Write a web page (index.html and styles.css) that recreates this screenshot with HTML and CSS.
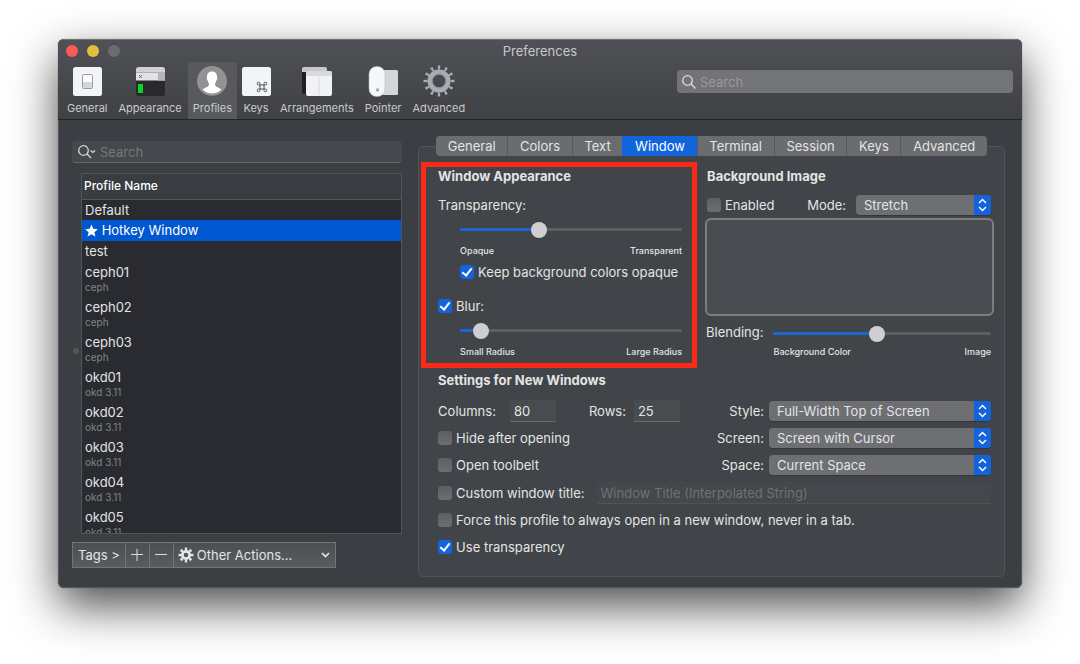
FILE: index.html
```html
<!DOCTYPE html>
<html lang="en">
<head>
  <meta charset="UTF-8" />
  <meta name="viewport" content="width=device-width, initial-scale=1.0"/>
  <title>Preferences</title>
  <link rel="stylesheet" href="styles.css">
</head>
<body>
  <div class="window">
    <header class="titlebar">
      <div class="title-row">
        <div class="lights">
          <button class="light close" aria-label="Close"></button>
          <button class="light minimize" aria-label="Minimize"></button>
          <button class="light zoom" aria-label="Zoom" disabled></button>
        </div>
        <h1>Preferences</h1>
      </div>
      <div class="toolbar">
        <button class="tool">
          <svg width="32" height="32" viewBox="0 0 32 32">
            <rect x="2" y="2" width="29" height="29" rx="2.5" fill="#f3f4f8"/>
            <rect x="11.5" y="9.5" width="10" height="14" rx="1" fill="#fbfbfc" stroke="#9a9ca1"/>
            <rect x="12" y="17" width="9" height="6" fill="#d3d6da"/>
          </svg>
          General
        </button>
        <button class="tool">
          <svg width="32" height="32" viewBox="0 0 32 32">
            <rect x="2" y="2" width="29" height="29" rx="2.5" fill="#29292b"/>
            <path d="M2 7.500V4.500A2.500 2.500 0 0 1 4.500 2H28.500A2.500 2.500 0 0 1 31 4.500V7.500Z" fill="#d2d2d4"/>
            <rect x="2" y="7.500" width="29" height="8" fill="#e2e3e4"/>
            <rect x="24" y="7.500" width="7" height="8" fill="#b4b6b8"/>
            <path d="M5 10l3 3m0-3l-3 3" stroke="#6b6d70"/>
            <rect x="4" y="19" width="5" height="9" fill="#0fd127"/>
          </svg>
          Appearance
        </button>
        <button class="tool active">
          <svg width="32" height="32" viewBox="0 0 32 32">
            <circle cx="16" cy="16" r="15" fill="#929294"/>
            <path d="M16 6.500c-3.500 0-5.200 2.400-5 5.500.1 1-.5 1 0 2.500.3 1 .9 1 1 1.700.2 1.600 1 2 1 3.300 0 2.500-4.500 3.300-6.500 5A14.900 14.900 0 0 0 16 28.500a14.900 14.900 0 0 0 9.500-4c-2-1.700-6.500-2.500-6.500-5 0-1.300.8-1.700 1-3.300.1-.7.700-.7 1-1.700.5-1.500-.1-1.500 0-2.500.2-3.100-1.500-5.500-5-5.500Z" fill="#fff"/>
          </svg>
          Profiles
        </button>
        <button class="tool">
          <svg width="32" height="32" viewBox="0 0 32 32">
            <rect x="2" y="2" width="29" height="29" rx="2.500" fill="#f3f4f8"/>
            <path d="M20 20h4v4h-4zM20 20h-1.400a1.400 1.400 0 1 1 1.400-1.400zM24 20h1.400a1.400 1.400 0 1 0-1.400-1.400zM20 24h-1.400a1.400 1.400 0 1 0 1.400 1.400zM24 24h1.400a1.400 1.400 0 1 1-1.400 1.400z" fill="none" stroke="#55575b"/>
          </svg>
          Keys
        </button>
        <button class="tool">
          <svg width="32" height="32" viewBox="0 0 32 32">
            <path d="M1 7h5v22H3a2 2 0 0 1-2-2z" fill="#202022"/>
            <path d="M1 7V4a2 2 0 0 1 2-2h21a2 2 0 0 1 2 2v3z" fill="#c7c8ca"/>
            <rect x="5" y="6" width="26" height="25" rx="2" fill="#f1f2f5"/>
            <path d="M5 11V8a2 2 0 0 1 2-2h22a2 2 0 0 1 2 2v3z" fill="#d9dadc"/>
            <path d="M18 12v18" stroke="#d5d7dc"/>
          </svg>
          Arrangements
        </button>
        <button class="tool">
          <svg width="32" height="32" viewBox="0 0 32 32">
            <rect x="14" y="5" width="17" height="25" rx="1.500" fill="#d3d7d8"/>
            <rect x="2" y="1.500" width="16" height="30" rx="7.500" fill="#f6f7f9" stroke="#b4b6b9" stroke-width=".5"/>
            <circle cx="10.500" cy="25" r="1.700" fill="#a5a7a9"/>
          </svg>
          Pointer
        </button>
        <button class="tool">
          <svg width="32" height="32" viewBox="0 0 32 32" fill="none">
            <circle cx="16" cy="16" r="13.500" stroke="#a6adb3" stroke-width="4" pathLength="36" stroke-dasharray="1 2" stroke-dashoffset=".5"/>
            <circle cx="16" cy="16" r="9" stroke="#a6adb3" stroke-width="5"/>
            <circle cx="16" cy="16" r="7" stroke="#8a9298"/>
          </svg>
          Advanced
        </button>
        <div class="search toolbar-search">
          <svg width="16" height="16" viewBox="0 0 16 16" fill="none" stroke="#dfdfe1" stroke-width="1.300">
            <circle cx="6.500" cy="6.500" r="4.800"/><path d="M10 10l4.500 4.500"/>
          </svg>
          <input type="search" placeholder="Search" aria-label="Search preferences">
        </div>
      </div>
    </header>

    <main class="content">
      <aside class="profiles">
        <div class="search profile-search">
          <svg width="20" height="16" viewBox="0 0 20 16" fill="none" stroke="#d4d5d6" stroke-width="1.300">
            <circle cx="6.500" cy="6.500" r="4.800"/><path d="M10 10l4 4M13.500 6.500l2.300 2 2.300-2"/>
          </svg>
          <input type="search" placeholder="Search" aria-label="Search profiles">
        </div>
        <div class="list">
          <table>
            <thead><tr><th>Profile Name</th></tr></thead>
            <tbody>
              <tr><td>Default</td></tr>
              <tr class="selected"><td><svg width="13" height="13" viewBox="0 0 24 24" fill="#fff"><path d="M12 1l3.300 7.800 8.400.7-6.400 5.500 2 8.300L12 18.900l-7.300 4.400 2-8.300L.3 9.500l8.400-.7z"/></svg> Hotkey Window</td></tr>
              <tr><td>test</td></tr>
              <tr class="tagged"><td>ceph01<small>ceph</small></td></tr>
              <tr class="tagged"><td>ceph02<small>ceph</small></td></tr>
              <tr class="tagged"><td>ceph03<small>ceph</small></td></tr>
              <tr class="tagged"><td>okd01<small>okd 3.11</small></td></tr>
              <tr class="tagged"><td>okd02<small>okd 3.11</small></td></tr>
              <tr class="tagged"><td>okd03<small>okd 3.11</small></td></tr>
              <tr class="tagged"><td>okd04<small>okd 3.11</small></td></tr>
              <tr class="tagged"><td>okd05<small>okd 3.11</small></td></tr>
            </tbody>
          </table>
        </div>
        <div class="actions">
          <button>Tags &gt;</button>
          <button class="square" aria-label="Add profile"><svg width="12" height="12" viewBox="0 0 12 12" stroke="#dedfe0"><path d="M0 5.500h12M6 0v12"/></svg></button>
          <button class="square" aria-label="Remove profile"><svg width="12" height="12" viewBox="0 0 12 12" stroke="#dedfe0"><path d="M0 5.500h12"/></svg></button>
          <button class="other">
            <svg width="16" height="16" viewBox="0 0 16 16" fill="none" stroke="#e6e7e8">
              <circle cx="8" cy="8" r="6.200" stroke-width="2.600" pathLength="16" stroke-dasharray="1 1" stroke-dashoffset=".5"/>
              <circle cx="8" cy="8" r="3.700" stroke-width="2.800"/>
            </svg>
            Other Actions...
            <svg class="caret" width="9" height="6" viewBox="0 0 9 6" fill="none" stroke="#e6e7e8" stroke-width="1.600"><path d="M1 1l3.500 3.500L8 1"/></svg>
          </button>
        </div>
        <span class="grip"></span>
      </aside>

      <div class="detail">
        <nav class="tabs">
          <button>General</button>
          <button>Colors</button>
          <button>Text</button>
          <button class="active">Window</button>
          <button>Terminal</button>
          <button>Session</button>
          <button>Keys</button>
          <button>Advanced</button>
        </nav>

        <div class="panel">
          <section class="appearance">
            <h2>Window Appearance</h2>
            <label class="slider-label" for="transparency">Transparency:</label>
            <div class="slider">
              <input type="range" id="transparency" min="0" max="1000" value="345" style="--fill: 35%">
              <div class="ends"><span>Opaque</span><span>Transparent</span></div>
            </div>
            <label class="check keep"><input type="checkbox" checked> Keep background colors opaque</label>
            <label class="check blur"><input type="checkbox" checked> Blur:</label>
            <div class="slider">
              <input type="range" aria-label="Blur radius" min="0" max="1000" value="64" style="--fill: 8%">
              <div class="ends"><span>Small Radius</span><span>Large Radius</span></div>
            </div>
          </section>

          <section class="background">
            <h2>Background Image</h2>
            <div class="mode-row">
              <label class="check"><input type="checkbox"> Enabled</label>
              <label class="mode-label" for="mode">Mode:</label>
              <div class="select">
                <select id="mode"><option>Stretch</option></select>
                <svg width="17" height="20" viewBox="0 0 17 20"><path d="M5 8l3.500-3.500L12 8M5 12l3.500 3.500L12 12"/></svg>
              </div>
            </div>
            <div class="well"></div>
            <div class="blend-row">
              <label for="blending">Blending:</label>
              <div class="slider">
                <input type="range" id="blending" min="0" max="1000" value="473" style="--fill: 47%">
                <div class="ends"><span>Background Color</span><span>Image</span></div>
              </div>
            </div>
          </section>

          <section class="settings">
            <h2>Settings for New Windows</h2>
            <div class="settings-grid">
              <div class="rows">
                <div class="size-row">
                  <label for="columns">Columns:</label>
                  <input class="field" type="text" id="columns" value="80">
                  <label class="rows-label" for="rows">Rows:</label>
                  <input class="field" type="text" id="rows" value="25">
                </div>
                <label class="check"><input type="checkbox"> Hide after opening</label>
                <label class="check"><input type="checkbox"> Open toolbelt</label>
              </div>
              <div class="rows">
                <div class="select-row">
                  <label for="style">Style:</label>
                  <div class="select">
                    <select id="style"><option>Full-Width Top of Screen</option></select>
                    <svg width="17" height="20" viewBox="0 0 17 20"><path d="M5 8l3.500-3.500L12 8M5 12l3.500 3.500L12 12"/></svg>
                  </div>
                </div>
                <div class="select-row">
                  <label for="screen">Screen:</label>
                  <div class="select">
                    <select id="screen"><option>Screen with Cursor</option></select>
                    <svg width="17" height="20" viewBox="0 0 17 20"><path d="M5 8l3.500-3.500L12 8M5 12l3.500 3.500L12 12"/></svg>
                  </div>
                </div>
                <div class="select-row">
                  <label for="space">Space:</label>
                  <div class="select">
                    <select id="space"><option>Current Space</option></select>
                    <svg width="17" height="20" viewBox="0 0 17 20"><path d="M5 8l3.500-3.500L12 8M5 12l3.500 3.500L12 12"/></svg>
                  </div>
                </div>
              </div>
            </div>
            <div class="rows">
              <div class="custom-row">
                <label class="check"><input type="checkbox"> Custom window title:</label>
                <input class="field title-field" type="text" placeholder="Window Title (Interpolated String)" aria-label="Window title" disabled>
              </div>
              <label class="check"><input type="checkbox"> Force this profile to always open in a new window, never in a tab.</label>
              <label class="check"><input type="checkbox" checked> Use transparency</label>
            </div>
          </section>
        </div>
      </div>
    </main>
  </div>
</body>
</html>
```
FILE: styles.css
```css
* {
  margin: 0;
  padding: 0;
  box-sizing: border-box;
}

body {
  font-family: Inter, 'Liberation Sans', sans-serif;
  font-size: 13px;
  line-height: 20px;
  color: #e3e4e5;
  background: #fff;
  min-height: 100vh;
  padding: 39px 58px;
}

button,
input,
select {
  font: inherit;
  color: inherit;
  border: none;
  background: none;
}

svg {
  flex: none;
}

.window {
  background: #3b3e42;
  border-radius: 6px;
  overflow: hidden;
  box-shadow: 0 0 1px rgba(0, 0, 0, 0.6),
              0 18px 46px rgba(0, 0, 0, 0.7);
}

/* title bar */

.titlebar {
  background: linear-gradient(#505156, #404145);
  border-top: 1px solid #727377;
  border-bottom: 1px solid #232427;
}

.title-row {
  display: grid;
  grid-template-columns: 1fr auto 1fr;
  align-items: center;
  height: 22px;
  padding: 0 8px;
}

.lights {
  display: flex;
  gap: 9px;
}

.light {
  width: 12px;
  height: 12px;
  border-radius: 50%;
}

.close {
  background: #fc5b57;
}

.minimize {
  background: #e5bf3c;
}

.zoom {
  background: #6a6c71;
}

h1 {
  font-size: 13px;
  font-weight: 400;
  color: #c6c7c9;
}

.toolbar {
  display: flex;
  gap: 1px;
  padding: 0 9px 0 4px;
}

.tool {
  display: flex;
  flex-direction: column;
  align-items: center;
  gap: 3px;
  min-width: 36px;
  height: 57px;
  padding: 3px 5px 0;
  font-size: 11px;
  line-height: 16px;
  color: #c9cacc;
}

.tool svg {
  margin: 0 -4px;
}

.tool.active {
  background: #58595d;
  border-radius: 4px 4px 0 0;
}

.search {
  display: flex;
  align-items: center;
  gap: 3px;
  border-radius: 4px;
}

.search input {
  flex: 1;
  min-width: 0;
  outline: none;
}

.toolbar-search {
  flex: 0 1 336px;
  height: 23px;
  margin: 8px 0 0 auto;
  padding: 0 4px;
  background: #737478;
}

.toolbar-search input::placeholder {
  color: #98999d;
}

/* profile list */

.content {
  display: grid;
  grid-template-columns: 36fr 64fr;
  gap: 16px;
  padding: 16px 16px 10px 13px;
  border: 1px solid #54575b;
  border-top: none;
  border-radius: 0 0 6px 6px;
}

.profiles {
  position: relative;
  display: flex;
  flex-direction: column;
  padding: 5px 0 9px;
}

.profile-search {
  height: 22px;
  padding: 0 5px;
  background: #45484c;
  border-bottom: 1px solid #65686b;
}

.profile-search input::placeholder {
  color: #75787b;
}

.list {
  flex: 1 1 0;
  min-height: 0;
  overflow: hidden;
  margin: 10px 0 8px 9px;
  background: #292b30;
  border: 1px solid #515458;
}

table {
  width: 100%;
  border-collapse: collapse;
}

th {
  height: 25px;
  padding: 0 2px;
  font-size: 12px;
  font-weight: 500;
  text-align: left;
  color: #fff;
  background: #393c40;
  border-bottom: 1px solid #54575a;
}

td {
  height: 21px;
  padding: 0 3px;
  vertical-align: top;
}

td svg {
  vertical-align: -2px;
}

small {
  display: block;
  font-size: 10px;
  line-height: 10px;
  color: #828487;
}

.tagged td {
  height: 35px;
}

.selected {
  color: #fff;
  background: #0058d0;
}

.actions {
  display: flex;
  align-self: flex-start;
}

.actions button {
  display: flex;
  align-items: center;
  justify-content: center;
  height: 26px;
  padding: 0 5px;
  background: linear-gradient(#4d5053, #595c5e);
  border: 1px solid #727577;
}

.actions button + button {
  border-left: none;
}

.actions .square {
  width: 24px;
}

.actions .other {
  gap: 3px;
  width: 162px;
  padding: 0 5px 0 4px;
}

.caret {
  margin-left: auto;
}

/* split view handle */
.grip {
  position: absolute;
  left: 1px;
  top: 48%;
  width: 6px;
  height: 6px;
  border-radius: 50%;
  background: #54575a;
}

/* tabs */

.detail {
  display: flex;
  flex-direction: column;
}

.tabs {
  position: relative;
  display: flex;
  margin: 0 18px -10px;
}

.tabs button {
  flex: auto;
  height: 20px;
  padding: 0 11px;
  background: #6a6c6f;
  border-left: 1px solid #56585b;
}

.tabs button:first-child {
  border-left: none;
  border-radius: 4px 0 0 4px;
}

.tabs button:last-child {
  border-radius: 0 4px 4px 0;
}

.tabs .active {
  color: #fff;
  background: #1165dc;
  border-color: #1165dc;
}

/* panel */

.panel {
  display: grid;
  grid-template-columns: 276fr 289fr;
  column-gap: 8px;
  padding: 15px 10px 19px 2px;
  background: #414448;
  border: 1px solid #515458;
  border-radius: 5px;
}

h2 {
  font-size: 13px;
  font-weight: 700;
  line-height: 18px;
}

.appearance {
  padding: 0 10px 4px 12px;
  border: 5px solid #fb2a17;
}

.slider-label {
  display: block;
  margin-top: 10px;
}

.slider {
  margin: 6px 0 0 22px;
}

input[type="range"] {
  -webkit-appearance: none;
  appearance: none;
  display: block;
  width: 100%;
  height: 16px;
}

input[type="range"]::-webkit-slider-runnable-track {
  height: 3px;
  border-radius: 2px;
  background: linear-gradient(to right, #1d66d2 var(--fill), #5d6063 var(--fill));
}

input[type="range"]::-webkit-slider-thumb {
  -webkit-appearance: none;
  width: 16px;
  height: 16px;
  margin-top: -6px;
  border-radius: 50%;
  background: #cecfd0;
}

.ends {
  display: flex;
  justify-content: space-between;
  margin-top: 7px;
  font-size: 9px;
  font-weight: 500;
  line-height: 14px;
}

.check {
  display: flex;
  align-items: center;
  gap: 4px;
  white-space: nowrap;
}

input[type="checkbox"] {
  -webkit-appearance: none;
  appearance: none;
  position: relative;
  flex: none;
  width: 14px;
  height: 14px;
  border-radius: 3px;
  background: linear-gradient(#5c5e61, #6c6e71);
}

input[type="checkbox"]:checked {
  background: #1263dc;
}

input[type="checkbox"]:checked::after {
  content: '';
  box-sizing: border-box;
  position: absolute;
  left: 4px;
  top: 1px;
  width: 6px;
  height: 10px;
  border: solid #fff;
  border-width: 0 2px 2px 0;
  transform: rotate(38deg);
}

.keep {
  margin: 4px 0 0 22px;
}

.blur {
  margin-top: 14px;
}

.background {
  padding-top: 5px;
}

.background h2 {
  padding-left: 2px;
}

.mode-row {
  display: flex;
  align-items: center;
  margin: 10px 3px 0 2px;
}

.mode-label {
  margin: 0 10px 0 auto;
}

.select {
  position: relative;
  flex: none;
  width: 222px;
}

.mode-row .select {
  width: 135px;
}

.select select {
  -webkit-appearance: none;
  appearance: none;
  display: block;
  width: 100%;
  height: 20px;
  padding: 0 24px 0 8px;
  border-radius: 4px;
  background: #6d6f72;
  box-shadow: 0 1px 1px rgba(0, 0, 0, 0.2);
}

.select svg {
  position: absolute;
  top: 0;
  right: 0;
  border-radius: 0 4px 4px 0;
  background: #1263dc;
  fill: none;
  stroke: #fff;
  stroke-width: 1.5;
  pointer-events: none;
}

.well {
  height: 98px;
  margin-top: 3px;
  border: 2px solid #7b7d80;
  border-radius: 6px;
  background: #494c50;
}

.blend-row {
  display: flex;
  margin: 6px 3px 0 1px;
}

.blend-row .slider {
  flex: 1;
  margin: 3px 0 0 10px;
}

.blend-row .ends {
  margin-top: 4px;
}

.settings {
  grid-column: 1 / -1;
  padding: 3px 3px 0 17px;
}

.settings-grid {
  display: flex;
  justify-content: space-between;
  margin: 12px 0 8px;
}

.rows {
  display: flex;
  flex-direction: column;
  gap: 7px;
}

.size-row,
.select-row,
.custom-row {
  display: flex;
  align-items: center;
  height: 20px;
}

.select-row {
  justify-content: flex-end;
  gap: 5px;
}

.field {
  width: 46px;
  height: 22px;
  margin-left: 14px;
  padding: 0 4px;
  background: #494c4f;
  border-bottom: 1px solid #67696c;
}

.rows-label {
  margin-left: 33px;
}

.rows-label + .field {
  margin-left: 8px;
}

.custom-row .title-field {
  flex: 1;
  margin-left: 12px;
  background: #44474b;
  border-color: #505356;
}

.title-field::placeholder {
  color: #6f7275;
}
```
